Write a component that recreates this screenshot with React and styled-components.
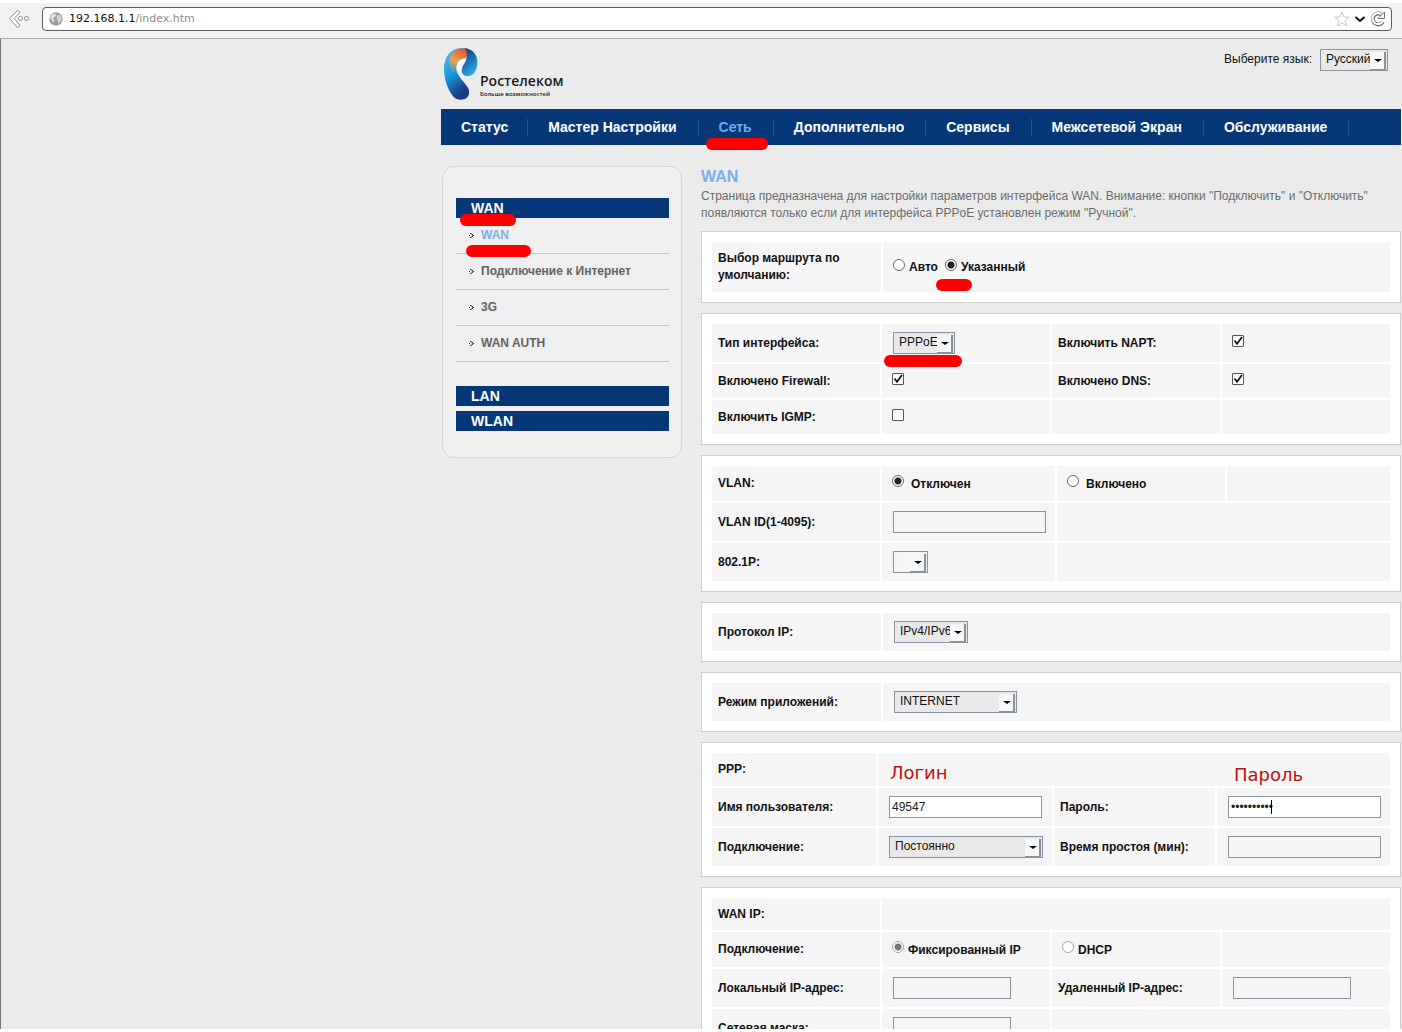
import React, { useState } from 'react';
import styled, { createGlobalStyle } from 'styled-components';

const GlobalStyle = createGlobalStyle`
  * {
    box-sizing: border-box;
  }
  body {
    margin: 0;
    background: #fff;
    color: #111;
    font-family: "Liberation Sans", Arial, sans-serif;
    font-size: 12px;
    line-height: 17px;
  }
  a {
    color: inherit;
    text-decoration: none;
  }
`;

const Browser = styled.div`
  height: 100vh;
  padding: 3px 0;
  display: flex;
  flex-direction: column;
  overflow: hidden;
`;

const Toolbar = styled.div`
  display: flex;
  align-items: center;
  flex: none;
  gap: 12px;
  height: 36px;
  padding: 0 10px 4px 8px;
  background: #f2f1ef;
  border-bottom: 1px solid #aeaaa4;
`;

const IconButton = styled.button`
  display: flex;
  padding: 0;
  border: 0;
  background: none;
  cursor: pointer;
`;

const AddressBar = styled.div`
  display: flex;
  align-items: center;
  flex: 1;
  gap: 4px;
  height: 24px;
  padding: 0 5px 0 6px;
  background: #fff;
  border: 1px solid #5c5c5c;
  border-radius: 4px;
`;

const Url = styled.div`
  flex: 1;
  padding-left: 2px;
  color: #8a8a8a;
  font-family: "DejaVu Sans", sans-serif;
  font-size: 11px;

  b {
    color: #111;
    font-weight: normal;
  }
`;

const Viewport = styled.div`
  flex: 1;
  min-height: 0;
  overflow: hidden;
  padding: 0 1px 0 440px;
  background: #ebebeb;
  border-left: 1px solid #777;
`;

const Header = styled.header`
  display: flex;
  justify-content: space-between;
  align-items: flex-start;
  padding: 9px 13px 9px 3px;
`;

const Logo = styled.a`
  display: flex;
  align-items: flex-start;
  gap: 2px;
  height: 52px;
  color: #1c1c1c;
  font-family: "Open Sans", "Noto Sans", sans-serif;
`;

const LogoName = styled.div`
  padding-top: 23px;
  font-size: 14px;
  font-weight: 600;
  line-height: 19px;
`;

const LogoSlogan = styled.div`
  font-size: 6px;
  font-weight: 600;
  line-height: 8px;
`;

const Language = styled.div`
  display: flex;
  align-items: center;
  gap: 8px;
  padding-top: 1px;

  label {
    margin-bottom: 2px;
  }
`;

const Nav = styled.nav`
  display: flex;
  align-items: center;
  height: 36px;
  background: #063878;
`;

const NavLink = styled.a`
  position: relative;
  padding: 0 21px 0 20px;
  border-right: 1px solid #1f55a0;
  color: ${({ $active }) => ($active ? '#6fa9f7' : '#fff')};
  font-size: 14px;
  font-weight: bold;
  white-space: nowrap;

  &:first-child {
    padding-right: 19px;
  }
`;

const Columns = styled.div`
  display: flex;
  align-items: flex-start;
  gap: 19px;
  padding: 21px 0 0 1px;
`;

const Sidebar = styled.aside`
  flex: none;
  width: 240px;
  padding: 31px 12px 26px 13px;
  background: #efefef;
  border: 1px solid #d6d6d6;
  border-radius: 12px;
`;

const MenuTitle = styled.a`
  display: block;
  position: relative;
  margin-bottom: ${({ $open }) => ($open ? '0' : '5px')};
  padding-left: 15px;
  background: #063878;
  color: #fff;
  font-size: 14px;
  font-weight: bold;
  line-height: 20px;

  &:last-child {
    margin-bottom: 0;
  }
`;

const Menu = styled.ul`
  margin: 0 0 24px;
  padding: 0;
  list-style: none;
`;

const MenuItem = styled.li`
  display: flex;
  align-items: center;
  gap: 7px;
  position: relative;
  height: 36px;
  padding-left: 13px;
  border-bottom: 1px solid #c4c4c4;
  color: ${({ $active }) => ($active ? '#7eaeea' : '#636363')};
  font-weight: bold;
`;

// Red marker strokes drawn over the page
const Marker = styled.span`
  position: absolute;
  left: ${({ $left }) => $left}px;
  top: ${({ $top }) => $top}px;
  z-index: 2;
  width: ${({ $width }) => $width}px;
  height: 12px;
  border-radius: 6px;
  background: #fe0000;
  pointer-events: none;
`;

const Note = styled.span`
  position: absolute;
  left: ${({ $left }) => $left}px;
  top: ${({ $top }) => $top}px;
  z-index: 1;
  color: #bb1212;
  font-family: "DejaVu Sans", sans-serif;
  font-size: 18px;
  font-weight: normal;
  line-height: 22px;
`;

const Content = styled.main`
  flex: 1;
  min-width: 0;
`;

const Title = styled.h1`
  margin: 0;
  color: #7eaeea;
  font-size: 16px;
  line-height: 22px;
`;

const Description = styled.p`
  margin: 0 0 9px;
  color: #6b6b6b;
`;

const Card = styled.section`
  display: grid;
  grid-template-columns: ${({ $cols }) => $cols.map((c) => `${c}fr`).join(' ')};
  grid-template-rows: ${({ $rows }) => $rows.map((r) => `minmax(${r}px, auto)`).join(' ')};
  gap: 2px;
  margin-bottom: 10px;
  padding: 10px;
  background: #fff;
  border: 1px solid #cfcfcf;
`;

const Cell = styled.div`
  display: flex;
  align-items: center;
  position: relative;
  min-width: 0;
  grid-column: span ${({ $span }) => $span || 1};
  padding: 7px 10px 7px ${({ $label }) => ($label ? '6px' : '11px')};
  background: #f5f5f5;
  font-weight: bold;
`;

const TextInput = styled.input`
  width: ${({ $width }) => $width || 153}px;
  height: 22px;
  padding: 0 2px;
  border: 1px solid #8794a2;
  border-radius: 0;
  outline: 0;
  background: #fff;
  color: #222;
  font: 12px "Liberation Sans", Arial, sans-serif;

  &:disabled {
    background: #f5f5f5;
  }
`;

const PasswordBox = styled.span`
  display: flex;
  position: relative;
`;

const Caret = styled.span`
  position: absolute;
  left: 43px;
  top: 4px;
  width: 1px;
  height: 14px;
  background: #000;
`;

const SelectBox = styled.span`
  display: inline-flex;
  position: relative;

  &::before {
    content: '';
    position: absolute;
    right: 2px;
    top: 3px;
    width: 14px;
    height: 17px;
    background: #f6f7f8;
    border: solid #8b9198;
    border-width: 0 2px 2px 0;
    pointer-events: none;
  }

  &::after {
    content: '';
    position: absolute;
    right: 6px;
    top: 10px;
    border: solid transparent;
    border-width: 3px 4px 0;
    border-top-color: #000;
    pointer-events: none;
  }
`;

const SelectInput = styled.select`
  appearance: none;
  width: ${({ $width }) => $width}px;
  height: 22px;
  padding: 0 0 2px 5px;
  border: 1px solid #8794a2;
  border-radius: 0;
  background: ${({ $empty }) => ($empty ? '#f5f5f5' : '#e9e9e9')};
  color: #111;
  font: 12px "Liberation Sans", Arial, sans-serif;
`;

const Radio = styled.input`
  appearance: none;
  flex: none;
  width: 12px;
  height: 12px;
  margin: 0 4px 6px 0;
  border: 1px solid #666;
  border-radius: 50%;
  background: #fff;

  &:checked {
    background: radial-gradient(circle, #222 0 3px, #fff 4px);
  }
  &:disabled {
    border-color: #a5a5a5;
  }
  &:disabled:checked {
    background: radial-gradient(circle, #777 0 3px, #fff 4px);
  }
`;

const RadioLabel = styled.label`
  display: flex;
  align-items: center;
  position: relative;
  margin: 1px 7px 0 0;
  gap: ${({ $wide }) => ($wide ? '3px' : '0')};
  white-space: nowrap;

  &:first-child {
    margin-left: -1px;
  }
`;

const CheckBox = styled.span`
  display: flex;
  position: relative;
  margin: 0 0 4px -1px;

  input {
    appearance: none;
    width: 12px;
    height: 12px;
    margin: 0;
    border: 1px solid #555;
    border-radius: 1px;
    background: #fff;
  }
  svg {
    position: absolute;
    left: 1px;
    top: 1px;
    pointer-events: none;
  }
`;

const Select = ({ options, ...props }) => (
  <SelectBox>
    <SelectInput {...props}>
      {options.map((o) => <option key={o}>{o}</option>)}
    </SelectInput>
  </SelectBox>
);

const Check = ({ id, initial }) => {
  const [checked, setChecked] = useState(initial);
  return (
    <CheckBox>
      <input id={id} type="checkbox" checked={checked} onChange={() => setChecked((prev) => !prev)} />
      {checked && (
        <svg width="10" height="10" viewBox="0 0 10 10" fill="none" stroke="#111" strokeWidth="1.700">
          <path d="M1.500 4.500 L4 7.800 L9 1" />
        </svg>
      )}
    </CheckBox>
  );
};

const Label = ({ htmlFor, children }) => (
  <Cell $label><label htmlFor={htmlFor}>{children}</label></Cell>
);

const BackIcon = () => (
  <svg width="22" height="20" viewBox="0 0 22 20" fill="#fff" stroke="#8d8d8d" strokeWidth="1">
    <path d="M9.500 1.500 L1.500 9.500 L9.500 18.500 L12 16.500 L6 9.500 L12 3.500 Z" />
    <circle cx="12.500" cy="9.500" r="2" />
    <circle cx="18.500" cy="9.500" r="2" />
  </svg>
);

const GlobeIcon = () => (
  <svg width="14" height="14" viewBox="0 0 14 14">
    <circle cx="7" cy="7" r="6.700" fill="#9b9b9b" />
    <path d="M2 3 L5 1.500 L7.500 2.500 L6 5 L4 6 L5.500 8.500 L4.500 11 L2.500 8 L1 6 Z" fill="#dedede" />
    <path d="M8.500 3 L11.500 3 L13 6.500 L11.500 10 L9.500 12 L8.500 8.500 L7.500 6 Z" fill="#d2d2d2" />
  </svg>
);

const StarIcon = () => (
  <svg width="16" height="16" viewBox="0 0 16 16" fill="#fff" stroke="#c9c9c9">
    <path d="M8 1 L10 6 L15.300 6.200 L11.200 9.600 L12.600 14.800 L8 11.900 L3.400 14.800 L4.800 9.600 L.7 6.200 L6 6 Z" />
  </svg>
);

const ChevronIcon = () => (
  <svg width="12" height="12" viewBox="0 0 12 12" fill="none" stroke="#111" strokeWidth="2">
    <path d="M1.500 4 L6 8 L10.500 4" />
  </svg>
);

const ReloadIcon = () => (
  <svg width="16" height="16" viewBox="0 0 16 16" fill="none">
    <path d="M12 3.800 A5.500 5.500 0 1 0 13 10.800" stroke="#777" strokeWidth="4" />
    <path d="M12 3.800 A5.500 5.500 0 1 0 12.700 10.400" stroke="#fff" strokeWidth="2" />
    <path d="M14.500 1 V7.500 H8 Z" fill="#fff" stroke="#777" />
  </svg>
);

const ArrowBullet = () => (
  <svg width="5" height="7" viewBox="0 0 5 7" fill="#333" shapeRendering="crispEdges">
    <path d="M1 1h2v1h-2z M2 2h2v1h-2z M3 3h2v1h-2z M2 4h2v1h-2z M1 5h2v1h-2z" fillOpacity="0.500" />
    <path d="M1 1h1v1h-1z M0 3h1v1h-1z M4 3h1v1h-1z M1 5h1v1h-1z M3 2h1v1h-1z M3 4h1v1h-1z" />
  </svg>
);

const LogoMark = () => (
  <svg width="34" height="52" viewBox="0 0 102 156">
    <defs>
      <linearGradient id="body" x1="0" y1="0" x2="0.400" y2="1">
        <stop offset="0" stopColor="#5ec8f2" />
        <stop offset="0.550" stopColor="#1499d9" />
        <stop offset="0.850" stopColor="#17569f" />
        <stop offset="1" stopColor="#1b3a7c" />
      </linearGradient>
      <linearGradient id="flame" x1="0.700" y1="0" x2="0.200" y2="1">
        <stop offset="0" stopColor="#e2592a" />
        <stop offset="0.550" stopColor="#f0a04e" />
        <stop offset="1" stopColor="#f0a04e" stopOpacity="0" />
      </linearGradient>
      <linearGradient id="curl" x1="0.200" y1="0" x2="0.700" y2="1">
        <stop offset="0" stopColor="#1d3c7e" />
        <stop offset="0.500" stopColor="#1b73b8" />
        <stop offset="1" stopColor="#37b2e6" />
      </linearGradient>
    </defs>
    <path d="M64 28 C44 34 34 48 37 68 L58 82 L60 56 Z" fill="#fafafa" />
    <path d="M56 0 C20 -2 0 28 0 62 C0 92 10 118 22 138 C32 154 46 158 60 154 C76 150 80 130 70 116 C58 98 38 82 37 62 C36 44 46 32 62 30 L72 4 Z" fill="url(#body)" />
    <path d="M66 1 C40 -1 18 14 16 38 C15 52 20 66 30 78 C34 70 33 64 36 54 C40 38 48 31 66 31 L72 14 Z" fill="url(#flame)" />
    <path d="M62 1 C84 2 100 18 100 42 C100 66 90 82 74 84 C60 86 52 76 53 66 C54 54 64 46 67 34 C69 24 70 10 62 1 Z" fill="url(#curl)" />
  </svg>
);

const sections = ['Статус', 'Мастер Настройки', 'Сеть', 'Дополнительно', 'Сервисы', 'Межсетевой Экран', 'Обслуживание'];
const wanPages = ['WAN', 'Подключение к Интернет', '3G', 'WAN AUTH'];

const App = () => {
  const [route, setRoute] = useState('manual');
  const [vlan, setVlan] = useState('off');
  const [user, setUser] = useState('49547');
  const [password, setPassword] = useState('0123456789');

  return (
    <>
      <GlobalStyle />
      <Browser>
        <Toolbar>
          <IconButton type="button" aria-label="Назад"><BackIcon /></IconButton>
          <AddressBar>
            <GlobeIcon />
            <Url>
              <b>192.168.1.1</b>
              /index.htm
            </Url>
            <IconButton type="button" aria-label="Закладка"><StarIcon /></IconButton>
            <IconButton type="button" aria-label="История"><ChevronIcon /></IconButton>
            <IconButton type="button" aria-label="Обновить"><ReloadIcon /></IconButton>
          </AddressBar>
        </Toolbar>
        <Viewport>
          <Header>
            <Logo href="#">
              <LogoMark />
              <div>
                <LogoName>Ростелеком</LogoName>
                <LogoSlogan>Больше возможностей</LogoSlogan>
              </div>
            </Logo>
            <Language>
              <label htmlFor="lang">Выберите язык:</label>
              <Select id="lang" $width={68} options={['Русский', 'English']} />
            </Language>
          </Header>
          <Nav>
            {sections.map((name) => (
              <NavLink key={name} href="#" $active={name === 'Сеть'}>
                {name}
                {name === 'Сеть' && <Marker $left={7} $top={19} $width={62} />}
              </NavLink>
            ))}
          </Nav>
          <Columns>
            <Sidebar>
              <MenuTitle href="#" $open>
                WAN
                <Marker $left={4} $top={16} $width={56} />
              </MenuTitle>
              <Menu>
                {wanPages.map((name) => (
                  <MenuItem key={name} $active={name === 'WAN'}>
                    <ArrowBullet />
                    <a href="#">{name}</a>
                    {name === 'WAN' && <Marker $left={10} $top={27} $width={65} />}
                  </MenuItem>
                ))}
              </Menu>
              <MenuTitle href="#">LAN</MenuTitle>
              <MenuTitle href="#">WLAN</MenuTitle>
            </Sidebar>
            <Content>
              <Title>WAN</Title>
              <Description>
                Страница предназначена для настройки параметров интерфейса WAN. Внимание: кнопки
                "Подключить" и "Отключить" появляются только если для интерфейса PPPoE установлен
                режим "Ручной".
              </Description>

              <Card $cols={[169, 507]} $rows={[50]}>
                <Cell $label>Выбор маршрута по умолчанию:</Cell>
                <Cell>
                  <RadioLabel>
                    <Radio type="radio" name="route" checked={route === 'auto'} onChange={() => setRoute('auto')} />
                    Авто
                  </RadioLabel>
                  <RadioLabel>
                    <Radio type="radio" name="route" checked={route === 'manual'} onChange={() => setRoute('manual')} />
                    Указанный
                    <Marker $left={-9} $top={20} $width={36} />
                  </RadioLabel>
                </Cell>
              </Card>

              <Card $cols={[1, 1, 1, 1]} $rows={[38, 34, 34]}>
                <Label htmlFor="type">Тип интерфейса:</Label>
                <Cell>
                  <Select id="type" $width={62} options={['PPPoE', 'IPoE', 'Bridge']} />
                  <Marker $left={2} $top={31} $width={78} />
                </Cell>
                <Label htmlFor="napt">Включить NAPT:</Label>
                <Cell><Check id="napt" initial /></Cell>
                <Label htmlFor="firewall">Включено Firewall:</Label>
                <Cell><Check id="firewall" initial /></Cell>
                <Label htmlFor="dns">Включено DNS:</Label>
                <Cell><Check id="dns" initial /></Cell>
                <Label htmlFor="igmp">Включить IGMP:</Label>
                <Cell><Check id="igmp" initial={false} /></Cell>
                <Cell />
                <Cell />
              </Card>

              <Card $cols={[168, 173, 168, 163]} $rows={[35, 38, 38]}>
                <Cell $label>VLAN:</Cell>
                <Cell>
                  <RadioLabel $wide>
                    <Radio type="radio" name="vlan" checked={vlan === 'off'} onChange={() => setVlan('off')} />
                    Отключен
                  </RadioLabel>
                </Cell>
                <Cell>
                  <RadioLabel $wide>
                    <Radio type="radio" name="vlan" checked={vlan === 'on'} onChange={() => setVlan('on')} />
                    Включено
                  </RadioLabel>
                </Cell>
                <Cell />
                <Label htmlFor="vlan-id">VLAN ID(1-4095):</Label>
                <Cell><TextInput id="vlan-id" disabled={vlan === 'off'} /></Cell>
                <Cell $span={2} />
                <Label htmlFor="priority">802.1P:</Label>
                <Cell><Select id="priority" $width={35} $empty options={['']} /></Cell>
                <Cell $span={2} />
              </Card>

              <Card $cols={[169, 507]} $rows={[38]}>
                <Label htmlFor="protocol">Протокол IP:</Label>
                <Cell><Select id="protocol" $width={74} options={['IPv4/IPv6', 'IPv4', 'IPv6']} /></Cell>
              </Card>

              <Card $cols={[169, 507]} $rows={[38]}>
                <Label htmlFor="mode">Режим приложений:</Label>
                <Cell><Select id="mode" $width={123} options={['INTERNET', 'TR069', 'OTHER']} /></Cell>
              </Card>

              <Card $cols={[164, 174, 161, 173]} $rows={[33, 38, 38]}>
                <Cell $label>PPP:</Cell>
                <Cell $span={3}>
                  <Note $left={12} $top={9}>Логин</Note>
                  <Note $left={356} $top={11}>Пароль</Note>
                </Cell>
                <Label htmlFor="user">Имя пользователя:</Label>
                <Cell><TextInput id="user" value={user} onChange={(e) => setUser(e.target.value)} /></Cell>
                <Label htmlFor="password">Пароль:</Label>
                <Cell>
                  <PasswordBox>
                    <TextInput id="password" type="password" value={password} onChange={(e) => setPassword(e.target.value)} />
                    <Caret />
                  </PasswordBox>
                </Cell>
                <Label htmlFor="connection">Подключение:</Label>
                <Cell><Select id="connection" $width={154} options={['Постоянно', 'По требованию', 'Ручной']} /></Cell>
                <Label htmlFor="idle">Время простоя (мин):</Label>
                <Cell><TextInput id="idle" disabled /></Cell>
              </Card>

              <Card $cols={[1, 1, 1, 1]} $rows={[32, 35, 38, 38]}>
                <Cell $label>WAN IP:</Cell>
                <Cell $span={3} />
                <Cell $label>Подключение:</Cell>
                <Cell>
                  <RadioLabel>
                    <Radio type="radio" name="wan-ip" disabled defaultChecked />
                    Фиксированный IP
                  </RadioLabel>
                </Cell>
                <Cell>
                  <RadioLabel>
                    <Radio type="radio" name="wan-ip" disabled />
                    DHCP
                  </RadioLabel>
                </Cell>
                <Cell />
                <Label htmlFor="local-ip">Локальный IP-адрес:</Label>
                <Cell><TextInput id="local-ip" $width={118} disabled /></Cell>
                <Label htmlFor="remote-ip">Удаленный IP-адрес:</Label>
                <Cell><TextInput id="remote-ip" $width={118} disabled /></Cell>
                <Label htmlFor="mask">Сетевая маска:</Label>
                <Cell><TextInput id="mask" $width={118} disabled /></Cell>
                <Cell $span={2} />
              </Card>
            </Content>
          </Columns>
        </Viewport>
      </Browser>
    </>
  );
};

export default App;
